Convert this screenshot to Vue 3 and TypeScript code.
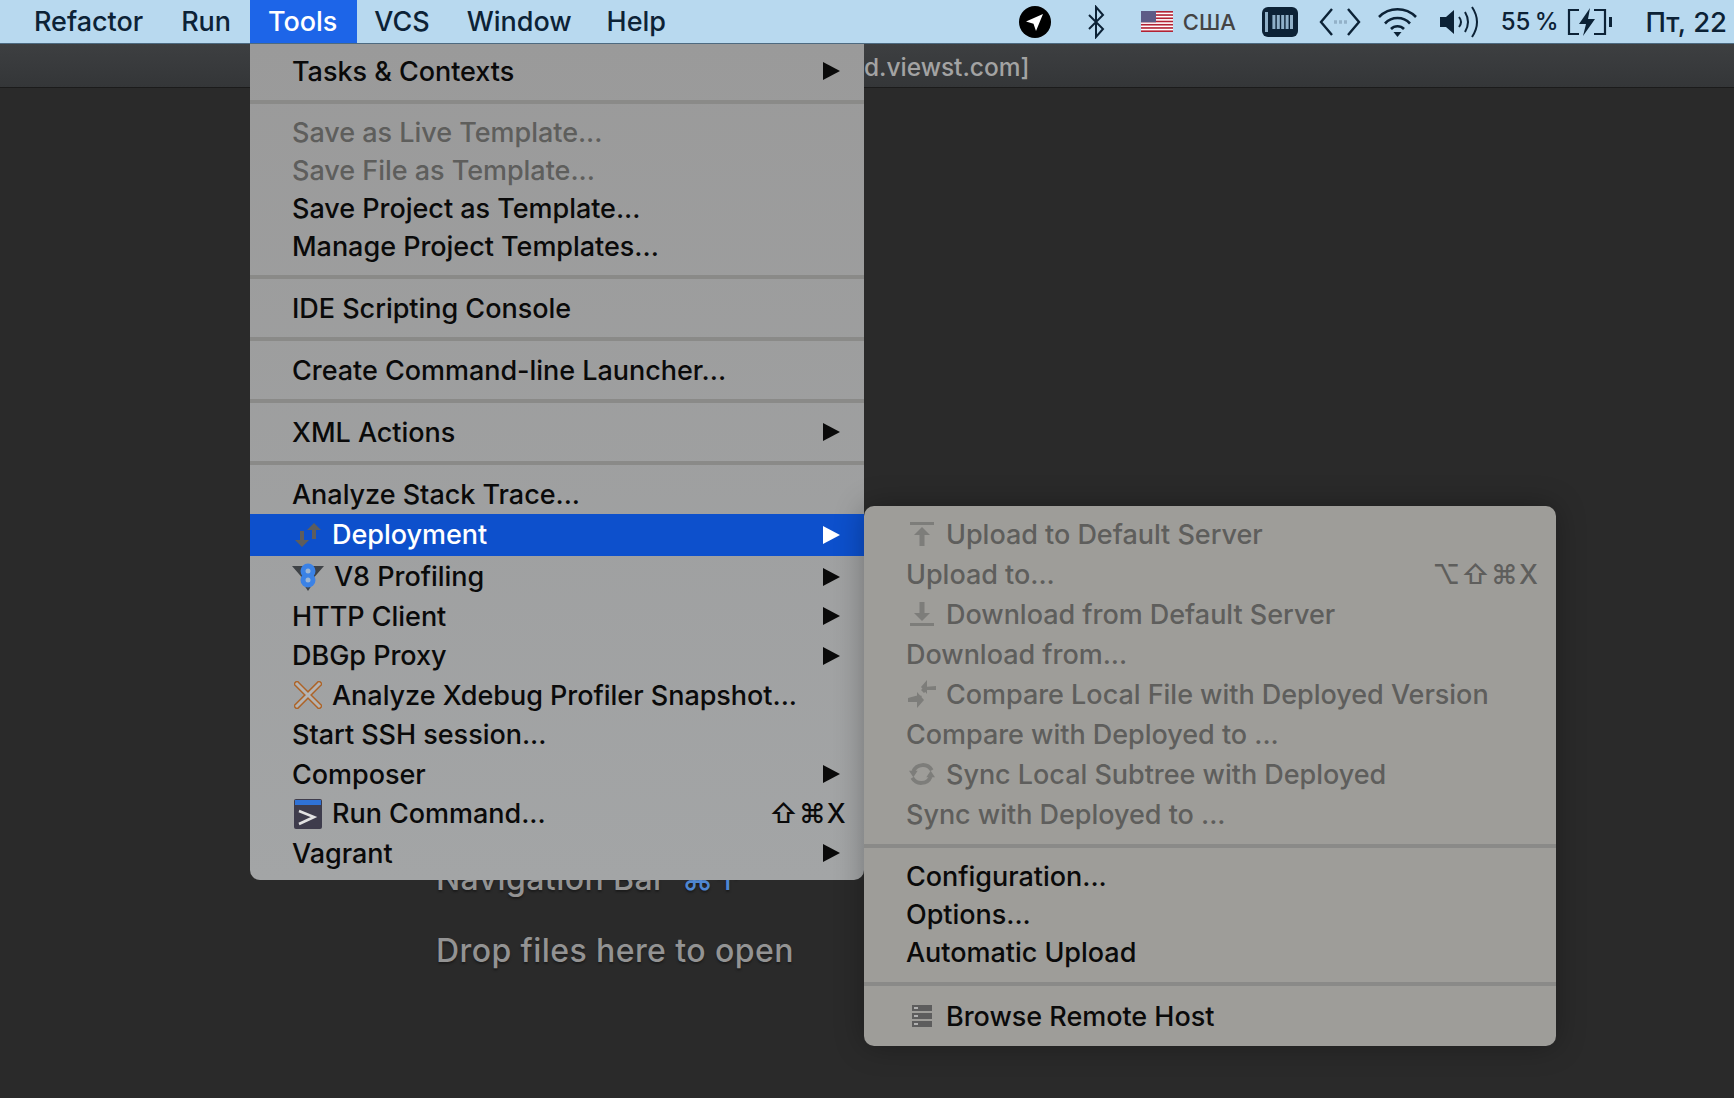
<template>
  <div class="screen">
    <header class="menubar">
      <span v-for="item in menuItems" :key="item" :class="['menu-title', { open: item === 'Tools' }]">{{ item }}</span>
      <div class="status">
        <svg class="st-telegram" width="32" height="32" viewBox="0 0 32 32">
          <circle cx="16" cy="16" r="16" fill="#000" />
          <path d="M24 8 7 15.5l7.5 2.2L17 25z" fill="#fff" />
        </svg>
        <svg class="st-bluetooth" width="18" height="34" viewBox="0 0 18 34" fill="none" stroke="#0c2236" stroke-width="2">
          <path d="M2 10 16 24 9 32V2l7 8L2 24" />
        </svg>
        <svg class="st-flag" width="32" height="21" viewBox="0 0 32 21">
          <rect width="32" height="21" fill="#fff" />
          <rect v-for="n in 7" :key="n" x="0" :y="(n - 1) * 3.23" width="32" height="1.62" fill="#b22234" />
          <rect width="15" height="11.3" fill="#5d5b86" />
        </svg>
        <span class="st-lang">США</span>
        <svg class="st-memory" width="36" height="30" viewBox="0 0 36 30">
          <rect width="36" height="30" rx="6" fill="#0c2236" />
          <rect x="3" y="5" width="3" height="20" fill="#8fb0c8" />
          <rect v-for="n in 5" :key="n" :x="6 + n * 4.4" y="8" width="3" height="14" fill="#8fb0c8" />
        </svg>
        <svg class="st-code" width="42" height="30" viewBox="0 0 42 30" fill="none" stroke="#0c2236" stroke-width="2.4">
          <path d="M13 2 2 15l11 13M29 2l11 13-11 13" />
          <path d="M15 15h3m2 0h3m2 0h3" stroke="#93b1c8" stroke-width="3.500" />
        </svg>
        <svg class="st-wifi" width="41" height="30" viewBox="0 0 41 30" fill="none" stroke="#0c2236" stroke-width="2.6">
          <path d="M2 10a26 26 0 0 1 37 0M8 16.500a17 17 0 0 1 25 0M14 22a9 9 0 0 1 13 0" />
          <path d="M16.500 25h8l-4 5z" fill="#0c2236" stroke="none" />
        </svg>
        <svg class="st-volume" width="41" height="34" viewBox="0 0 41 34" fill="none" stroke="#0c2236" stroke-width="2">
          <path d="M1 12h6l8-7v24l-8-7H1z" fill="#0c2236" stroke="none" />
          <path d="M20 12q4 5 0 10M26 7q6 10 0 20M33 2q10 15 0 30" />
        </svg>
        <span class="st-battery-text">55 %</span>
        <svg class="st-battery" width="46" height="28" viewBox="0 0 46 28" fill="none" stroke="#0c2236" stroke-width="2.2">
          <path d="M12 2H2v24h10M27 2h11v24H27" />
          <path d="M42 9h3v10h-3z" fill="#0c2236" stroke="none" />
          <path d="M23 0 12 16h7l-3 12 12-17h-7z" fill="#0c2236" stroke="none" />
        </svg>
        <span class="st-clock">Пт, 22</span>
      </div>
    </header>

    <div class="titlebar">d.viewst.com]</div>

    <main class="welcome">
      <div class="hint">Navigation Bar <span class="hint-key">⌘↑</span></div>
      <div class="hint drop">Drop files here to open</div>
    </main>

    <section v-for="menu in menus" :key="menu.id" :class="['menu', menu.id]">
      <template v-for="(group, g) in menu.groups" :key="g">
        <hr v-if="g > 0" class="sep" />
        <div
          v-for="row in group"
          :key="row.label"
          :class="['row', menu.id + '-row', { off: row.off, active: row.active, loose: row.loose }]"
        >
          <span v-if="row.icon" :class="['icon', 'icon-' + row.icon]">
            <svg v-if="row.icon === 'deploy'" width="28" height="24" viewBox="0 0 28 24" fill="#5d5d5d">
              <path d="M6 8h4v9h5l-7 7-7-7h5zM18 16V7h-5l7-7 7 7h-5v9z" />
            </svg>
            <svg v-else-if="row.icon === 'v8'" width="32" height="28" viewBox="0 0 32 28">
              <path d="M0 3h11l2 15zM32 3H21l-2 15zM12 22h8l-4 6z" fill="#3f4347" />
              <circle cx="16" cy="8" r="7.500" fill="#3b82e6" />
              <circle cx="16" cy="17" r="7.500" fill="#3b82e6" />
              <circle cx="16" cy="8" r="2.500" fill="#9cb6d6" />
              <circle cx="16" cy="17" r="2.500" fill="#9cb6d6" />
            </svg>
            <svg v-else-if="row.icon === 'xdebug'" width="28" height="28" viewBox="0 0 28 28" fill="none" stroke-linecap="square">
              <path d="M3 3l22 22M25 3 3 25" stroke="#ad6428" stroke-width="6" />
              <path d="M3 3l22 22M25 3 3 25" stroke="#b4b4b4" stroke-width="3" />
            </svg>
            <svg v-else-if="row.icon === 'run'" width="28" height="30" viewBox="0 0 28 30">
              <rect width="28" height="30" rx="2" fill="#3e3c4c" />
              <rect x="1" y="1" width="26" height="5" fill="#2f72d6" />
              <path d="M5 12l15 6-15 7" fill="none" stroke="#e2e2e2" stroke-width="2.600" />
            </svg>
            <svg v-else-if="row.icon === 'upload'" width="24" height="24" viewBox="0 0 24 24" fill="#7d7d7a">
              <path d="M0 0h24v3H0zM12 5l8 8h-5.500v11h-5V13H4z" />
            </svg>
            <svg v-else-if="row.icon === 'download'" width="24" height="24" viewBox="0 0 24 24" fill="#7d7d7a">
              <path d="M0 21h24v3H0zM12 19l8-8h-5.500V0h-5v11H4z" />
            </svg>
            <svg v-else-if="row.icon === 'compare'" width="28" height="28" viewBox="0 0 28 28" fill="#7d7d7a">
              <path d="M28 6v4H19l-3 3-3-3 3-3zM19 0v14l-6-7zM0 18v4h9l3-3 2-3-3-1zM9 12v16l7-8z" />
            </svg>
            <svg v-else-if="row.icon === 'sync'" width="26" height="26" viewBox="0 0 24 24" fill="none" stroke="#7d7d7a" stroke-width="3.500">
              <path d="M21 8.500A9.500 9.500 0 0 0 4 9.500M3 15.500A9.500 9.500 0 0 0 20 14.500" />
              <path d="M0 9h8l-4 6zM16 15h8l-4-6z" fill="#7d7d7a" stroke="none" />
            </svg>
            <svg v-else-if="row.icon === 'server'" width="20" height="22" viewBox="0 0 20 22">
              <g v-for="n in 3" :key="n">
                <rect x="0" :y="(n - 1) * 8" width="20" height="6" fill="#5d5d5d" />
                <rect x="2" :y="(n - 1) * 8 + 2" width="4" height="2" fill="#b0b0b0" />
              </g>
            </svg>
          </span>
          <span class="label">{{ row.label }}</span>
          <span v-if="row.keys" class="keys">{{ row.keys }}</span>
          <span v-if="row.sub" class="arrow" />
        </div>
      </template>
    </section>
  </div>
</template>

<script setup lang="ts">
interface Row {
  label: string
  icon?: string
  sub?: boolean
  off?: boolean
  active?: boolean
  loose?: boolean
  keys?: string
}

const menuItems = ['Refactor', 'Run', 'Tools', 'VCS', 'Window', 'Help']

const tools: Row[][] = [
  [{ label: 'Tasks & Contexts', sub: true }],
  [
    { label: 'Save as Live Template...', off: true },
    { label: 'Save File as Template...', off: true },
    { label: 'Save Project as Template...' },
    { label: 'Manage Project Templates...' },
  ],
  [{ label: 'IDE Scripting Console' }],
  [{ label: 'Create Command-line Launcher...' }],
  [{ label: 'XML Actions', sub: true }],
  [
    { label: 'Analyze Stack Trace...' },
    { label: 'Deployment', icon: 'deploy', sub: true, active: true },
    { label: 'V8 Profiling', icon: 'v8', sub: true, loose: true },
    { label: 'HTTP Client', sub: true, loose: true },
    { label: 'DBGp Proxy', sub: true, loose: true },
    { label: 'Analyze Xdebug Profiler Snapshot...', icon: 'xdebug', loose: true },
    { label: 'Start SSH session...', loose: true },
    { label: 'Composer', sub: true, loose: true },
    { label: 'Run Command...', icon: 'run', keys: '⇧⌘X', loose: true },
    { label: 'Vagrant', sub: true, loose: true },
  ],
]

const deployment: Row[][] = [
  [
    { label: 'Upload to Default Server', icon: 'upload', off: true, loose: true },
    { label: 'Upload to...', keys: '⌥⇧⌘X', off: true, loose: true },
    { label: 'Download from Default Server', icon: 'download', off: true, loose: true },
    { label: 'Download from...', off: true, loose: true },
    { label: 'Compare Local File with Deployed Version', icon: 'compare', off: true, loose: true },
    { label: 'Compare with Deployed to ...', off: true, loose: true },
    { label: 'Sync Local Subtree with Deployed', icon: 'sync', off: true, loose: true },
    { label: 'Sync with Deployed to ...', off: true, loose: true },
  ],
  [{ label: 'Configuration...' }, { label: 'Options...' }, { label: 'Automatic Upload' }],
  [{ label: 'Browse Remote Host', icon: 'server' }],
]

const menus = [
  { id: 'tools', groups: tools },
  { id: 'deployment', groups: deployment },
]
</script>

<style scoped>
.screen {
  position: relative;
  width: 1734px;
  height: 1098px;
  overflow: hidden;
  background: #2a2a2a;
  font-family: Inter, "Liberation Sans", sans-serif;
  font-size: 27px;
  font-weight: 450;
  letter-spacing: -0.03px;
  color: #0a0a0a;
}

.menubar {
  display: flex;
  align-items: center;
  height: 43px;
  padding-left: 15px;
  background: #b8d9ef;
  border-bottom: 1px solid #4d6a80;
  color: #0c2236;
}

.menu-title {
  display: flex;
  align-items: center;
  height: 100%;
  padding: 0 19px;
}

.menu-title:nth-child(4) {
  padding-left: 17px;
}

.menu-title:nth-child(5) {
  padding-left: 18px;
  margin-right: -3px;
}

.menu-title.open {
  padding-left: 18px;
  padding-right: 20px;
  background: #1d65e8;
  color: #fff;
}

.status {
  display: flex;
  align-items: center;
  margin-left: auto;
  padding-right: 7px;
}

.st-bluetooth { margin-left: 36px; }
.st-flag { margin-left: 36px; }
.st-lang { margin-left: 10px; font-size: 22px; color: #444; }
.st-memory { margin-left: 26px; }
.st-code { margin-left: 21px; }
.st-wifi { margin-left: 16px; }
.st-volume { margin-left: 21px; }
.st-battery-text { margin-left: 21px; font-size: 24px; word-spacing: -2px; }
.st-battery { margin-left: 8px; }
.st-clock { margin-left: 33px; font-size: 27.5px; }

.titlebar {
  height: 43px;
  padding-left: 864px;
  line-height: 46px;
  font-size: 24.5px;
  color: #a3a3a3;
  background: linear-gradient(#3d3f41, #343638);
  border-bottom: 1px solid #1b1b1b;
}

.welcome {
  padding: 773px 0 0 436px;
  font-size: 32px;
  letter-spacing: 0.42px;
  color: #939393;
  text-shadow: 0 2px 2px #1c1c1c;
}

.hint {
  height: 36px;
  line-height: 36px;
}

.hint-key {
  margin-left: 7px;
  color: #4f87d1;
}

.hint.drop {
  margin-top: 36px;
}

.menu {
  position: absolute;
  box-sizing: border-box;
}

.tools {
  top: 44px;
  left: 250px;
  width: 614px;
  height: 836px;
  padding-top: 8px;
  background: linear-gradient(#9a9a9a, #a3a5a6);
  border-radius: 0 0 10px 10px;
}

.deployment {
  top: 506px;
  left: 864px;
  width: 692px;
  height: 540px;
  padding-top: 8px;
  background: #9e9d99;
  border-radius: 10px;
  box-shadow: 0 0 30px rgba(0, 0, 0, 0.3);
}

.sep {
  height: 4px;
  margin: 10px 0;
  border: 0;
  background: #8a8a88;
}

.tools .sep:first-of-type,
.deployment .sep:first-of-type {
  margin-bottom: 9px;
}

.deployment .sep:last-of-type {
  margin-top: 11px;
  margin-bottom: 11px;
}

.row {
  display: flex;
  align-items: center;
  height: 38px;
  padding-left: 42px;
  white-space: nowrap;
}

.row.loose {
  height: 39.5px;
}

.deployment-row.loose {
  height: 40px;
}

.row.off {
  color: #5e5e5c;
}

.row.active {
  box-sizing: border-box;
  height: 42px;
  margin-top: 1px;
  margin-bottom: 1px;
  padding-bottom: 1px;
  background: #0d50cc;
  color: #fff;
}

.icon {
  display: flex;
  flex: none;
  align-items: center;
  justify-content: center;
  width: 32px;
  margin-right: 8px;
}

.icon-v8 {
  margin-right: 10px;
}

.keys {
  margin-left: auto;
  padding-right: 17px;
  letter-spacing: 1.2px;
}

.arrow {
  flex: none;
  width: 0;
  height: 0;
  margin-left: auto;
  margin-right: 24px;
  border-top: 9px solid transparent;
  border-bottom: 9px solid transparent;
  border-left: 17px solid currentColor;
}
</style>

<style>
body {
  background: #2a2a2a;
}
</style>
